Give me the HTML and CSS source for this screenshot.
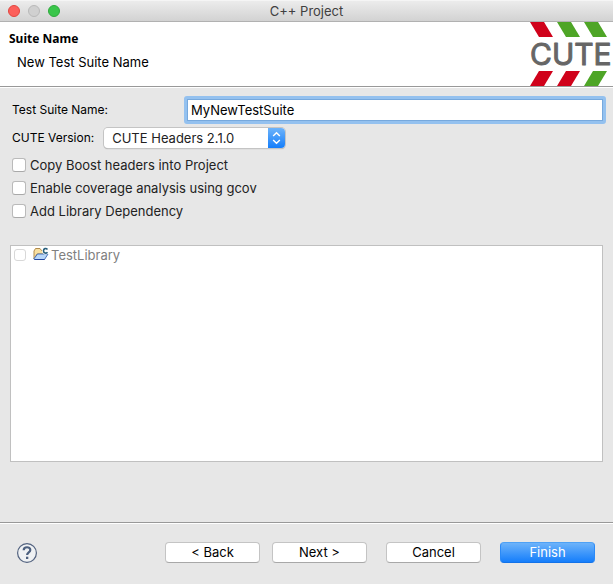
FILE: index.html
```html
<!DOCTYPE html>
<html lang="en">
<head>
<meta charset="utf-8">
<title>C++ Project</title>
<link rel="stylesheet" href="styles.css">
</head>
<body>
<form class="window">
  <div class="titlebar">
    <div class="lights">
      <button type="button" class="light close" aria-label="Close"></button>
      <button type="button" class="light minimize" aria-label="Minimize" disabled></button>
      <button type="button" class="light expand" aria-label="Zoom"></button>
    </div>
    <div class="title">C++ Project</div>
  </div>
  <header class="banner">
    <div class="heading">
      <h1>Suite Name</h1>
      <p>New Test Suite Name</p>
    </div>
    <svg class="logo" width="83" height="64" viewBox="0 0 83 64" role="img" aria-label="CUTE">
      <g fill="#d0021b">
        <path d="M0 0h14l9 15H9z"/>
        <path d="M9 49h14l-9 15H0z"/>
        <path d="M36 49h14l-9 15H27z"/>
      </g>
      <g fill="#4ea526">
        <path d="M27 0h14l9 15H36z"/>
        <path d="M54 0h14l9 15H63z"/>
        <path d="M63 49h14l-9 15H54z"/>
      </g>
      <text class="wordmark" x="0" y="43">CUTE</text>
    </svg>
  </header>
  <main class="content">
    <div class="field name-field">
      <label for="suite">Test Suite Name:</label>
      <input type="text" id="suite" value="MyNewTestSuite">
    </div>
    <div class="field version-field">
      <label for="version">CUTE Version:</label>
      <div class="popup">
        <select id="version"><option>CUTE Headers 2.1.0</option></select>
        <svg class="arrows" width="17" height="21" viewBox="0 0 17 21" aria-hidden="true">
          <path d="M5 8.500l3.500-3.500L12 8.500M5 12.500l3.500 3.500L12 12.500"/>
        </svg>
      </div>
    </div>
    <div class="options">
      <label><input type="checkbox">Copy Boost headers into Project</label>
      <label><input type="checkbox">Enable coverage analysis using gcov</label>
      <label><input type="checkbox">Add Library Dependency</label>
    </div>
    <div class="libraries">
      <label class="library"><input type="checkbox" disabled>
        <svg width="16" height="14" viewBox="0 0 16 14" aria-hidden="true">
          <path d="M1 12V4L2.500 1.500h4.500l1.500 2h3V7L4 7z" fill="#f8dfa0" stroke="#b18a4b"/>
          <path d="M.8 12L4.500 7H15l-3.500 5.500H1.500z" fill="#b9d7f8" stroke="#4a72b8"/>
          <path d="M1.500 12.500h10" stroke="#2447a0"/>
          <path d="M14.500 2.500C13 .8 10.500 1.400 10.500 3.800S13 6.800 14.500 5.200" fill="none" stroke="#fff" stroke-width="3"/>
          <path d="M14.500 2.500C13 .8 10.500 1.400 10.500 3.800S13 6.800 14.500 5.200" fill="none" stroke="#285f7c" stroke-width="1.600"/>
        </svg>
        <span>TestLibrary</span></label>
    </div>
  </main>
  <footer class="footer">
    <button type="button" class="help" aria-label="Help">
      <svg width="20" height="20" viewBox="0 0 20 20" aria-hidden="true">
        <circle cx="10" cy="10" r="9.400" fill="#eff1f3" stroke="#52627f" stroke-width="1.200"/>
        <path d="M6.700 7.300C6.700 3.300 13.300 3.300 13.300 7c0 2.400-3.200 2.500-3.200 5" fill="none" stroke="#4d607f" stroke-width="2.200"/>
        <path d="M9 13.700h2.300v2.300H9z" fill="#4d607f"/>
      </svg>
    </button>
    <div class="actions">
      <button type="button" class="push">&lt; Back</button>
      <button type="button" class="push">Next &gt;</button>
    </div>
    <div class="actions closing">
      <button type="button" class="push">Cancel</button>
      <button type="submit" class="push primary">Finish</button>
    </div>
  </footer>
</form>
</body>
</html>
```
FILE: styles.css
```css
* { box-sizing: border-box; }

body {
  margin: 0;
  background: #e7e7e7;
  color: #000;
  font: 13px/16px Inter, sans-serif;
}

button, input, select { font: inherit; color: inherit; margin: 0; }

.window {
  display: flex;
  flex-direction: column;
  min-height: 100vh;
}

.titlebar {
  display: grid;
  grid-template-columns: 1fr auto 1fr;
  align-items: center;
  height: 22px;
  padding: 0 8px;
  background: linear-gradient(#ececec, #d2d2d2);
  border-top: 1px solid #f5f5f5;
  border-bottom: 1px solid #b1b1b1;
}

.lights { display: flex; gap: 8px; }

.light {
  width: 12px;
  height: 12px;
  padding: 0;
  border: 1px solid #e2463f;
  border-radius: 50%;
  background: #fc605b;
}
.minimize { background: #d0d0d0; border-color: #b9b9b9; }
.expand { background: #3ac64b; border-color: #2eaa3c; }

.title { color: #404040; }

.banner {
  display: flex;
  justify-content: space-between;
  background: #fff;
  border-bottom: 1px solid #999;
}

.heading { padding: 9px; }
.heading h1 {
  margin: 0;
  font: bold 12px/16px "Noto Sans", sans-serif;
}
.heading p { margin: 7px 8px 0; }

.logo { display: block; }
.wordmark {
  font: 30px Inter, sans-serif;
  fill: #666;
  stroke: #666;
  stroke-width: 1px;
  stroke-linejoin: round;
}

.content {
  flex: 1;
  display: flex;
  flex-direction: column;
  padding: 8px 10px 60px;
  border-top: 1px solid #fff;
}

.field { display: flex; align-items: center; padding-left: 2px; }
.field label { font-size: 12px; }

.name-field { gap: 16px; margin-right: -3px; }
.name-field label { width: 156px; }
.name-field input {
  flex: 1;
  min-width: 0;
  height: 28px;
  padding: 0 4px;
  border: 3px solid #94c1ef;
  border-radius: 3px;
  box-shadow: inset 0 0 0 1px #77a9dd;
  background: #fff;
  outline: 0;
}

.version-field { gap: 10px; margin-top: 4px; }
.popup {
  display: grid;
  border-radius: 4px;
  box-shadow: 0 0 0 1px #c4c4c4, 0 1px 1px #999;
  overflow: hidden;
}
.popup select, .arrows { grid-area: 1 / 1; }
.popup select {
  appearance: none;
  width: 181px;
  height: 20px;
  padding: 0 24px 1px 8px;
  border: 0;
  background: #fff;
  color: #222;
}
.arrows {
  justify-self: end;
  height: 20px;
  background: linear-gradient(#6db3fa, #157efb);
  fill: none;
  stroke: #fff;
  stroke-width: 1.5px;
  pointer-events: none;
}

.options {
  display: grid;
  gap: 7px;
  justify-items: start;
  margin: 9px 2px 26px;
  color: #222;
}
.options label, .library { display: flex; align-items: center; }
.options label { gap: 4px; }

input[type="checkbox"] {
  appearance: none;
  width: 14px;
  height: 14px;
  border: 1px solid #bababa;
  border-bottom-color: #a9a9a9;
  border-radius: 3px;
  background: #fff;
}

.libraries {
  flex: 1;
  min-height: 120px;
  padding: 1px 3px;
  border: 1px solid #c0c0c0;
  background: #fff;
}
.library { color: #808080; }
.library input[type="checkbox"] {
  width: 12px;
  height: 12px;
  border-color: #d8d8d8;
}
.library svg { margin: 0 2px 2px 7px; }

.footer {
  display: flex;
  align-items: center;
  height: 62px;
  padding: 0 18px 2px 17px;
  border-top: 1px solid #999;
  box-shadow: inset 0 1px #fff;
}

.help { padding: 0; border: 0; background: none; line-height: 0; }

.actions { display: flex; gap: 12px; margin-left: auto; }
.closing { gap: 19px; margin-left: 19px; }

.push {
  width: 95px;
  height: 21px;
  padding: 0;
  border: 1px solid #c4c4c4;
  border-bottom-color: #a8a8a8;
  border-radius: 4px;
  background: #fff;
  line-height: 19px;
}
.primary {
  border-color: #4ea1f5 #2b8af7 #1272e8;
  background: linear-gradient(#6db3fa, #157efb);
  color: #fff;
}
```
